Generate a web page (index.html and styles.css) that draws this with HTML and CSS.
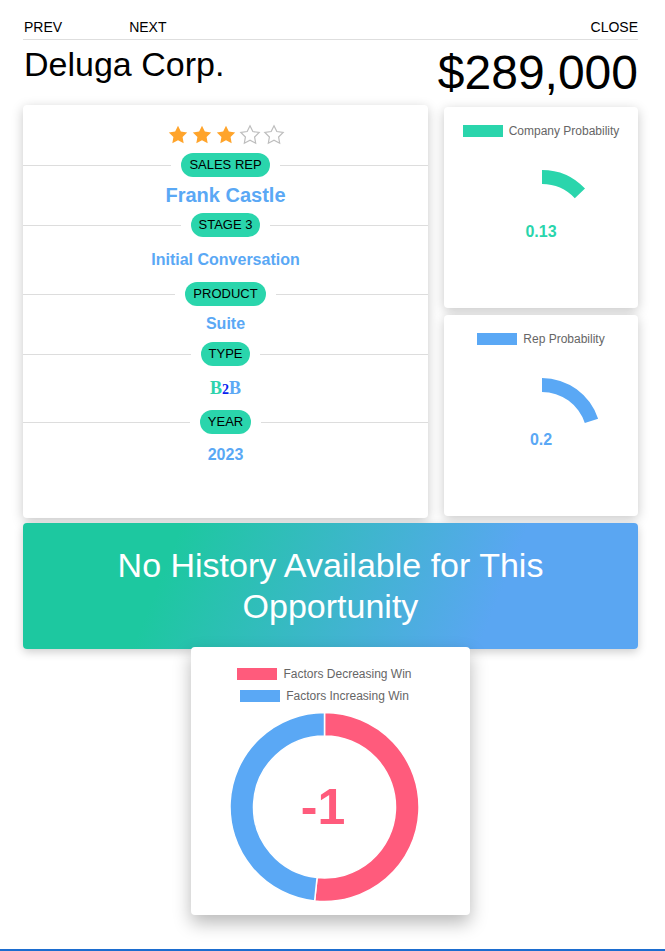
FILE: index.html
```html
<!DOCTYPE html>
<html>
<head>
<meta charset="utf-8">
<link rel="stylesheet" href="styles.css">
</head>
<body>
<div class="page">
  <nav class="topnav">
    <a class="nav-link nav-prev">PREV</a>
    <a class="nav-link">NEXT</a>
    <a class="nav-link nav-close">CLOSE</a>
  </nav>

  <header class="title-row">
    <h1 class="company">Deluga Corp.</h1>
    <div class="amount">$289,000</div>
  </header>

  <section class="overview">
    <div class="card info-card">
      <div class="stars">
        <svg class="star filled" viewBox="0 0 24 24"><path d="M12 2l3.09 6.26L22 9.27l-5 4.87 1.18 6.88L12 17.77l-6.18 3.25L7 14.14 2 9.27l6.91-1.01z"/></svg>
        <svg class="star filled" viewBox="0 0 24 24"><path d="M12 2l3.09 6.26L22 9.27l-5 4.87 1.18 6.88L12 17.77l-6.18 3.25L7 14.14 2 9.27l6.91-1.01z"/></svg>
        <svg class="star filled" viewBox="0 0 24 24"><path d="M12 2l3.09 6.26L22 9.27l-5 4.87 1.18 6.88L12 17.77l-6.18 3.25L7 14.14 2 9.27l6.91-1.01z"/></svg>
        <svg class="star empty" viewBox="0 0 24 24"><path d="M12 2l3.09 6.26L22 9.27l-5 4.87 1.18 6.88L12 17.77l-6.18 3.25L7 14.14 2 9.27l6.91-1.01z"/></svg>
        <svg class="star empty" viewBox="0 0 24 24"><path d="M12 2l3.09 6.26L22 9.27l-5 4.87 1.18 6.88L12 17.77l-6.18 3.25L7 14.14 2 9.27l6.91-1.01z"/></svg>
      </div>

      <div class="divider"><span class="pill">SALES REP</span></div>
      <div class="value value-rep">Frank Castle</div>

      <div class="divider"><span class="pill">STAGE 3</span></div>
      <div class="value value-stage">Initial Conversation</div>

      <div class="divider"><span class="pill">PRODUCT</span></div>
      <div class="value value-product">Suite</div>

      <div class="divider"><span class="pill">TYPE</span></div>
      <div class="value value-type"><span class="b2b"><span class="b-first">B</span><span class="b-two">2</span><span class="b-last">B</span></span></div>

      <div class="divider"><span class="pill">YEAR</span></div>
      <div class="value value-year">2023</div>
    </div>

    <div class="side">
      <div class="card gauge-card">
        <div class="legend-row"><span class="legend-box teal"></span><span class="legend-label">Company Probability</span></div>
        <div class="gauge">
          <svg class="gauge-svg" viewBox="0 0 194 171" width="194" height="171">
            <path class="arc-teal" d="M98 33 A59 59 0 0 1 141.01 51.61 L130.8 61.2 A45 45 0 0 0 98 47 Z"/>
          </svg>
          <span class="gauge-value teal-text">0.13</span>
        </div>
      </div>
      <div class="card gauge-card">
        <div class="legend-row"><span class="legend-box blue"></span><span class="legend-label">Rep Probability</span></div>
        <div class="gauge">
          <svg class="gauge-svg" viewBox="0 0 194 171" width="194" height="171">
            <path class="arc-blue" d="M98 33 A59 59 0 0 1 154.11 73.77 L140.8 78.1 A45 45 0 0 0 98 47 Z"/>
          </svg>
          <span class="gauge-value blue-text">0.2</span>
        </div>
      </div>
    </div>
  </section>

  <div class="banner">No History Available for This Opportunity</div>

  <div class="card factors-card">
    <div class="legend-row"><span class="legend-box pink"></span><span class="legend-label">Factors Decreasing Win</span></div>
    <div class="legend-row"><span class="legend-box blue"></span><span class="legend-label">Factors Increasing Win</span></div>
    <div class="donut">
      <svg class="donut-svg" viewBox="0 0 267 214" width="267" height="214">
        <path class="seg-pink" d="M133.5 11.5 A94.5 94.5 0 1 1 123.62 199.98 L126.08 176.61 A71 71 0 1 0 133.5 35 Z"/>
        <path class="seg-blue" d="M123.62 199.98 A94.5 94.5 0 0 1 133.5 11.5 L133.5 35 A71 71 0 0 0 126.08 176.61 Z"/>
      </svg>
      <span class="donut-value">-1</span>
    </div>
  </div>
</div>
</body>
</html>
```

FILE: styles.css
```css
* { box-sizing: border-box; }

html, body {
  margin: 0;
  padding: 0;
  background: #ffffff;
}

body {
  font-family: "Liberation Sans", Arial, Helvetica, sans-serif;
  color: #000;
}

.page {
  min-height: 100vh;
  padding: 0 27px 0 23px;
  border-bottom: 2px solid #1c6dcf;
  display: flex;
  flex-direction: column;
}

/* top nav */
.topnav {
  display: flex;
  align-items: center;
  padding: 19px 0 4px 1px;
  border-bottom: 1px solid #dedede;
}
.nav-link {
  font-size: 14px;
  line-height: 16px;
  color: #000;
  cursor: pointer;
}
.nav-prev { margin-right: 67px; }
.nav-close { margin-left: auto; }

/* title */
.title-row {
  display: flex;
  justify-content: space-between;
  align-items: flex-start;
  margin-top: 5px;
  padding-left: 1px;
}
.company {
  margin: 0;
  font-size: 34px;
  font-weight: normal;
  line-height: 39px;
}
.amount {
  font-size: 48px;
  line-height: 55px;
}

/* cards */
.card {
  background: #fff;
  border-radius: 4px;
  box-shadow: 0 3px 12px rgba(0, 0, 0, 0.22);
}

.overview {
  display: grid;
  grid-template-columns: 405px 194px;
  column-gap: 16px;
  margin-top: 5px;
}

.info-card {
  min-height: 413px;
  padding-top: 19px;
}

.stars {
  display: flex;
  justify-content: center;
  gap: 2px;
  height: 22px;
  margin-bottom: 7px;
}
.star {
  width: 22px;
  height: 22px;
}
.star.filled path { fill: #ffa42b; }
.star.empty path {
  fill: none;
  stroke: #bdbdbd;
  stroke-width: 1.3;
}

.divider {
  display: flex;
  align-items: center;
  gap: 10px;
  height: 24px;
}
.divider::before,
.divider::after {
  content: "";
  flex: 1;
  height: 1px;
  background: #dddddd;
}
.pill {
  background: #2ad5ac;
  border-radius: 12px;
  height: 24px;
  line-height: 24px;
  padding: 0 8px;
  font-size: 13px;
  color: #000;
}

.value {
  display: flex;
  align-items: center;
  justify-content: center;
  color: #5aa8f5;
  font-weight: bold;
  font-size: 16px;
}
.value-rep { height: 36px; font-size: 20px; }
.value-stage { height: 45px; }
.value-product { height: 36px; }
.value-type { height: 44px; }
.value-year { height: 42px; }

.b2b {
  font-family: "Liberation Serif", "Times New Roman", serif;
  font-weight: bold;
  font-size: 18px;
}
.b-first { color: #2ed3ad; }
.b-two { color: #0a1ff0; font-size: 14px; }
.b-last { color: #5ca8f5; }

/* side gauges */
.side {
  display: flex;
  flex-direction: column;
  gap: 7px;
  margin-top: 2px;
}
.gauge-card {
  height: 201px;
  padding-top: 18px;
}
.legend-row {
  display: flex;
  justify-content: center;
  align-items: center;
  gap: 6px;
  height: 12px;
}
.legend-box {
  width: 40px;
  height: 12px;
}
.legend-box.teal { background: #2ad5ac; }
.legend-box.blue { background: #5aa8f5; }
.legend-box.pink { background: #ff5b7c; }
.legend-label {
  font-size: 12px;
  color: #666;
  line-height: 12px;
}

.gauge {
  position: relative;
  height: 171px;
}
.gauge-svg { display: block; }
.arc-teal { fill: #2ad5ac; }
.arc-blue { fill: #5aa8f5; }
.gauge-value {
  position: absolute;
  left: 0;
  width: 194px;
  top: 85px;
  text-align: center;
  font-size: 16px;
  font-weight: bold;
  line-height: 20px;
}
.teal-text { color: #2ad5ac; }
.blue-text { color: #5aa8f5; }

/* banner */
.banner {
  margin-top: 5px;
  border-radius: 4px;
  padding: 22px 30px;
  text-align: center;
  color: #fff;
  font-size: 34px;
  line-height: 41px;
  background: linear-gradient(112deg, #1dc8a0 24%, #5aa6f2 76%);
  box-shadow: 0 3px 10px rgba(0, 0, 0, 0.2);
}

/* factors */
.factors-card {
  align-self: center;
  width: 279px;
  height: 268px;
  margin-top: -2px;
  padding: 21px 12px 0 0;
  display: flex;
  flex-direction: column;
  gap: 10px;
  box-shadow: 0 8px 18px rgba(0, 0, 0, 0.28);
}
.donut {
  position: relative;
  margin-top: -11px;
  height: 214px;
}
.donut-svg { display: block; }
.seg-pink { fill: #ff5b7c; stroke: #fff; stroke-width: 1.5; }
.seg-blue { fill: #5aa8f5; stroke: #fff; stroke-width: 1.5; }
.donut-value {
  position: absolute;
  left: 0;
  width: 264px;
  top: 77px;
  text-align: center;
  font-size: 50px;
  line-height: 58px;
  font-weight: bold;
  color: #ff5b7c;
}
```
